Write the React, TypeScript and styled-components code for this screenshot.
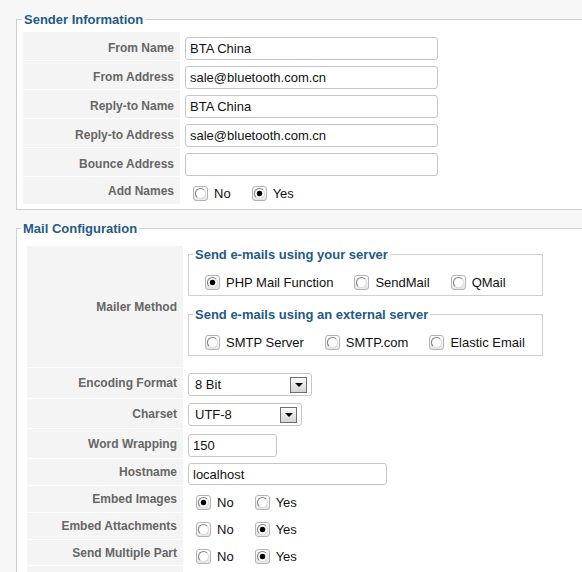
import styled, { createGlobalStyle } from 'styled-components'

const GlobalStyle = createGlobalStyle`
  html, body {
    margin: 0;
    padding: 0;
    overflow: hidden;
  }
  body {
    background: #f7f7f7;
    font-family: "Liberation Sans", Arial, sans-serif;
  }
`

const Page = styled.div`
  width: 640px;
  padding: 12px 0 0 16px;
`

const Section = styled.fieldset<{ $pad: string }>`
  margin: 0 0 11px;
  padding: ${(p) => p.$pad};
  border: 1px solid #cfcfcf;
  background: #fff;
  min-width: 0;
`

const Legend = styled.legend`
  padding: 0 2px;
  font: bold 13px/15px "Liberation Sans", Arial, sans-serif;
  color: #255a85;
`

const FormTable = styled.table<{ $indent?: number }>`
  border-collapse: separate;
  border-spacing: 1px;
  margin-left: ${(p) => p.$indent ?? 0}px;
`

const Row = styled.tr<{ $h?: number }>`
  height: ${(p) => (p.$h ? `${p.$h}px` : 'auto')};
`

const Label = styled.td<{ $w: number; $shift?: number }>`
  width: ${(p) => p.$w - 12}px;
  padding: ${(p) => p.$shift ?? 0}px 6px 0;
  background: #f4f4f4;
  text-align: right;
  vertical-align: middle;
  font: bold 12px/14px "Liberation Sans", Arial, sans-serif;
  color: #666;
  white-space: nowrap;
`

const Value = styled.td<{ $top?: number; $bottom?: number }>`
  padding: ${(p) => p.$top ?? 0}px 4px ${(p) => p.$bottom ?? 0}px;
  vertical-align: top;
`

const TextInput = styled.input<{ $w: number; $h?: number }>`
  display: block;
  box-sizing: border-box;
  width: ${(p) => p.$w}px;
  height: ${(p) => p.$h ?? 23}px;
  margin: 0;
  padding: 0 4px;
  border: 1px solid #c6c6c6;
  border-radius: 3px;
  background: #fff;
  font: 13px "Liberation Sans", Arial, sans-serif;
  color: #111;
  outline: none;
`

const Select = styled.div<{ $w: number }>`
  box-sizing: border-box;
  width: ${(p) => p.$w}px;
  height: 23px;
  display: flex;
  align-items: center;
  justify-content: space-between;
  padding: 0 4px 0 6px;
  border: 1px solid #c6c6c6;
  border-radius: 3px;
  background: #fff;
  font: 13px "Liberation Sans", Arial, sans-serif;
  color: #111;
`

const DropButton = styled.span`
  box-sizing: border-box;
  width: 17px;
  height: 16px;
  display: flex;
  align-items: center;
  justify-content: center;
  border: 1px solid #6e6e6e;
  background: linear-gradient(#fbfbfb, #d4d4d4);
  &::after {
    content: '';
    border-left: 4px solid transparent;
    border-right: 4px solid transparent;
    border-top: 4px solid #000;
  }
`

const OptionRow = styled.div<{ $indent: number }>`
  display: flex;
  gap: 21px;
  padding-left: ${(p) => p.$indent}px;
`

const Option = styled.label`
  display: inline-flex;
  align-items: center;
  gap: 6px;
  font: 13px/15px "Liberation Sans", Arial, sans-serif;
  color: #111;
  white-space: nowrap;
`

const RadioBox = styled.span<{ $on?: boolean }>`
  box-sizing: border-box;
  width: 15px;
  height: 15px;
  flex: none;
  display: flex;
  align-items: center;
  justify-content: center;
  border: 1px solid #b4b4b4;
  border-radius: 3px;
  background: linear-gradient(#ffffff, #e6e6e6);
  &::before {
    content: '';
    box-sizing: border-box;
    width: 11px;
    height: 11px;
    border-radius: 50%;
    border: 1px solid;
    border-color: #7d7d7d #dcdcdc #dcdcdc #7d7d7d;
    background: ${(p) =>
      p.$on ? 'radial-gradient(circle, #000 0 2.4px, #fff 3.2px)' : '#fff'};
  }
`

const Group = styled.fieldset`
  box-sizing: border-box;
  width: 355px;
  margin: 0;
  padding: 13px 0 5px 4px;
  border: 1px solid #cfcfcf;
  min-width: 0;
  & + & {
    margin-top: 11px;
  }
`

function Radio({ label, on }: { label: string; on?: boolean }) {
  return (
    <Option>
      <RadioBox $on={on} />
      {label}
    </Option>
  )
}

function YesNo({ yes }: { yes: boolean }) {
  return (
    <OptionRow $indent={8}>
      <Radio label='No' on={!yes} />
      <Radio label='Yes' on={yes} />
    </OptionRow>
  )
}

export default function App() {
  return (
    <>
      <GlobalStyle />
      <Page>
        <Section $pad='4px 0 4px 5px'>
          <Legend>Sender Information</Legend>
          <FormTable>
            <tbody>
              <Row $h={28}>
                <Label $w={157} $shift={3}>From Name</Label>
                <Value $top={5}>
                  <TextInput $w={253} defaultValue='BTA China' />
                </Value>
              </Row>
              <Row $h={28}>
                <Label $w={157} $shift={3}>From Address</Label>
                <Value $top={5}>
                  <TextInput $w={253} defaultValue='sale@bluetooth.com.cn' />
                </Value>
              </Row>
              <Row $h={28}>
                <Label $w={157} $shift={3}>Reply-to Name</Label>
                <Value $top={5}>
                  <TextInput $w={253} defaultValue='BTA China' />
                </Value>
              </Row>
              <Row $h={28}>
                <Label $w={157} $shift={3}>Reply-to Address</Label>
                <Value $top={5}>
                  <TextInput $w={253} defaultValue='sale@bluetooth.com.cn' />
                </Value>
              </Row>
              <Row $h={28}>
                <Label $w={157} $shift={3}>Bounce Address</Label>
                <Value $top={5}>
                  <TextInput $w={253} defaultValue='' />
                </Value>
              </Row>
              <Row $h={27}>
                <Label $w={157}>Add Names</Label>
                <Value $top={9}>
                  <YesNo yes />
                </Value>
              </Row>
            </tbody>
          </FormTable>
        </Section>

        <Section $pad='9px 0 4px 4px'>
          <Legend>Mail Configuration</Legend>
          <FormTable $indent={5}>
            <tbody>
              <Row>
                <Label $w={156}>Mailer Method</Label>
                <Value $top={1} $bottom={11}>
                  <Group>
                    <Legend>Send e-mails using your server</Legend>
                    <OptionRow $indent={12}>
                      <Radio label='PHP Mail Function' on />
                      <Radio label='SendMail' />
                      <Radio label='QMail' />
                    </OptionRow>
                  </Group>
                  <Group>
                    <Legend>Send e-mails using an external server</Legend>
                    <OptionRow $indent={12}>
                      <Radio label='SMTP Server' />
                      <Radio label='SMTP.com' />
                      <Radio label='Elastic Email' />
                    </OptionRow>
                  </Group>
                </Value>
              </Row>
              <Row $h={30}>
                <Label $w={156}>Encoding Format</Label>
                <Value $top={5}>
                  <Select $w={124}>
                    8 Bit
                    <DropButton />
                  </Select>
                </Value>
              </Row>
              <Row $h={29}>
                <Label $w={156}>Charset</Label>
                <Value $top={4}>
                  <Select $w={114}>
                    UTF-8
                    <DropButton />
                  </Select>
                </Value>
              </Row>
              <Row $h={29}>
                <Label $w={156}>Word Wrapping</Label>
                <Value $top={5}>
                  <TextInput $w={89} defaultValue='150' />
                </Value>
              </Row>
              <Row $h={26}>
                <Label $w={156}>Hostname</Label>
                <Value $top={4}>
                  <TextInput $w={199} $h={22} defaultValue='localhost' />
                </Value>
              </Row>
              <Row $h={26}>
                <Label $w={156}>Embed Images</Label>
                <Value $top={9}>
                  <YesNo yes={false} />
                </Value>
              </Row>
              <Row $h={26}>
                <Label $w={156}>Embed Attachments</Label>
                <Value $top={9}>
                  <YesNo yes />
                </Value>
              </Row>
              <Row $h={25}>
                <Label $w={156}>Send Multiple Part</Label>
                <Value $top={9}>
                  <YesNo yes />
                </Value>
              </Row>
              <Row $h={26}>
                <Label $w={156} />
                <Value />
              </Row>
            </tbody>
          </FormTable>
        </Section>
      </Page>
    </>
  )
}
